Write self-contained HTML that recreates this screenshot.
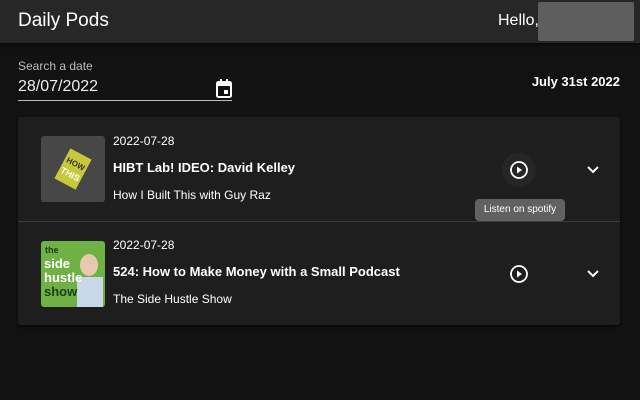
<!DOCTYPE html>
<html><head><style>
*{margin:0;padding:0;box-sizing:border-box}
body{width:640px;height:400px;background:#121212;font-family:"Liberation Sans",sans-serif;color:#fff;position:relative;overflow:hidden}
.hdr{position:absolute;left:0;top:0;width:640px;height:43px;background:#272727;box-shadow:0 2px 4px rgba(0,0,0,.5)}
.t{position:absolute;left:18px;top:10px;font-size:19px}
.hello{position:absolute;left:498px;top:12px;font-size:16px}
.blur{position:absolute;left:538px;top:2px;width:96px;height:39px;background:#5e5e5e;border-radius:2px}
.lbl{position:absolute;left:18px;top:59px;font-size:12px;color:#bdbdbd}
.inp{position:absolute;left:18px;top:78px;font-size:16px;color:#eee}
.line{position:absolute;left:18px;top:100px;width:214px;height:1px;background:#bbb}
.cal{position:absolute;left:215px;top:79px}
.jd{position:absolute;right:20px;top:74px;font-size:13px;font-weight:bold}
.card{position:absolute;left:18px;top:117px;width:602px;height:208px;background:#1e1e1e;box-shadow:0 2px 3px rgba(0,0,0,.6);border-radius:3px}
.row{position:absolute;left:0;width:602px;height:104px}
.div{position:absolute;left:0;top:104px;width:602px;height:1px;background:#3a3a3a}
.img{position:absolute;left:23px;top:19px;width:64px;height:66px;border-radius:3px}
.d{position:absolute;left:95px;top:17px;font-size:12px}
.ti{position:absolute;left:95px;top:43px;font-size:13px;font-weight:bold}
.sh{position:absolute;left:95px;top:71px;font-size:12px}
.play{position:absolute}
.chev{position:absolute;left:568px;top:48px}
.tip{position:absolute;left:475px;top:199px;width:90px;height:22px;background:#616161;border-radius:4px;font-size:10px;color:#fff;text-align:center;line-height:22px}
</style></head><body>
<div class="hdr"><div class="t">Daily Pods</div><div class="hello">Hello,</div><div class="blur"></div></div>
<div class="lbl">Search a date</div>
<div class="inp">28/07/2022</div>
<div class="line"></div>
<svg class="cal" width="18" height="20" viewBox="0 0 18 20"><rect x="2" y="3" width="14" height="15" rx="1.5" fill="none" stroke="#fff" stroke-width="2"/><rect x="2" y="3" width="14" height="4" fill="#fff"/><rect x="5" y="0" width="2" height="4" fill="#fff"/><rect x="11" y="0" width="2" height="4" fill="#fff"/><rect x="9" y="11" width="4" height="4" fill="#fff"/></svg>
<div class="jd">July 31st 2022</div>
<div class="card">
 <div class="row" style="top:0">
  <div class="img" style="background:#474747"><svg width="64" height="66"><g transform="rotate(28 32 33)"><rect x="20" y="16" width="24" height="34" fill="#c8c93a"/><text x="32" y="30" font-size="8" font-weight="bold" text-anchor="middle" fill="#333" font-family="Liberation Sans">HOW</text><text x="32" y="42" font-size="9" font-weight="bold" text-anchor="middle" fill="#fff" font-family="Liberation Sans">THIS</text></g></svg></div>
  <div class="d">2022-07-28</div>
  <div class="ti">HIBT Lab! IDEO: David Kelley</div>
  <div class="sh">How I Built This with Guy Raz</div>
  <svg class="play" style="left:484px;top:36px" width="34" height="34"><circle cx="17" cy="17" r="17" fill="#262626"/><circle cx="17" cy="17" r="8" fill="none" stroke="#fff" stroke-width="1.8"/><path d="M15 13.5v7l5-3.5z" fill="#fff"/></svg>
  <svg class="chev" width="14" height="10"><path d="M2 2l5 5 5-5" fill="none" stroke="#fff" stroke-width="2"/></svg>
 </div>
 <div class="div"></div>
 <div class="row" style="top:104px">
  <div class="img" style="background:#6fb144;top:20px"><svg width="64" height="66"><ellipse cx="48" cy="24" rx="9" ry="11" fill="#e8c8b0"/><rect x="36" y="36" width="26" height="30" fill="#c8d8e8"/><text x="4" y="12" font-size="9" font-family="Liberation Sans" font-weight="bold" style="fill:#1e3d10">the</text><text x="3" y="27" font-size="13" font-weight="bold" fill="#fff" font-family="Liberation Sans">side</text><text x="3" y="41" font-size="13" font-weight="bold" fill="#fff" font-family="Liberation Sans">hustle</text><text x="3" y="55" font-size="13" font-weight="bold" fill="#1e3d10" font-family="Liberation Sans">show</text></svg></div>
  <div class="d">2022-07-28</div>
  <div class="ti">524: How to Make Money with a Small Podcast</div>
  <div class="sh">The Side Hustle Show</div>
  <svg class="play" style="left:484px;top:36px" width="34" height="34"><circle cx="17" cy="17" r="8" fill="none" stroke="#fff" stroke-width="1.8"/><path d="M15 13.5v7l5-3.5z" fill="#fff"/></svg>
  <svg class="chev" width="14" height="10"><path d="M2 2l5 5 5-5" fill="none" stroke="#fff" stroke-width="2"/></svg>
 </div>
</div>
<div class="tip">Listen on spotify</div>
</body></html>
